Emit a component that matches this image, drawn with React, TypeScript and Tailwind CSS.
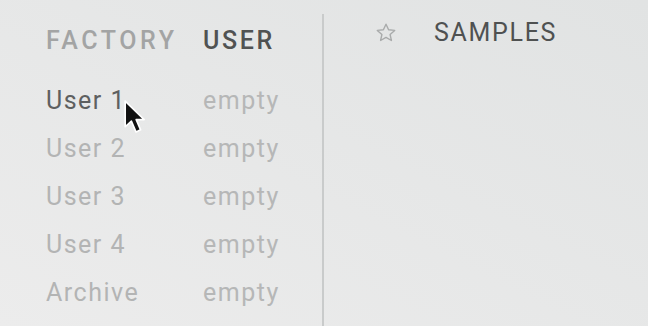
import React from "react";

const rows = ["User 1", "User 2", "User 3", "User 4", "Archive"];

function Cursor() {
  return (
    <svg
      className="absolute left-[123px] top-[99px]"
      width="27"
      height="37"
      viewBox="0 0 26 36"
    >
      <path
        d="M2 2 L2 27 L8 21.5 L12.5 32 L17 30 L12.7 20 L20.5 20 Z"
        fill="#111"
        stroke="#fff"
        strokeWidth="1.6"
        strokeLinejoin="round"
      />
    </svg>
  );
}

function Star() {
  return (
    <svg width="24" height="24" viewBox="0 0 24 24" className="text-[#a9abab]">
      <path
        d="M12 3.2l2.6 5.6 6.1.6-4.6 4.1 1.3 6-5.4-3.1-5.4 3.1 1.3-6-4.6-4.1 6.1-.6z"
        fill="none"
        stroke="currentColor"
        strokeWidth="1.4"
        strokeLinejoin="round"
      />
    </svg>
  );
}

export default function App() {
  return (
    <div
      className="relative flex h-[326px] w-[648px] overflow-hidden bg-gradient-to-tr from-[#ececec] to-[#e1e3e3] text-[25px]"
      style={{ fontFamily: "Roboto, 'Liberation Sans', sans-serif" }}
    >
      <div className="w-[322px] shrink-0 pl-[46px] pt-[17px]">
        <div className="grid h-[48px] grid-cols-[157px_auto] items-center font-medium leading-[48px]">
          <span className="tracking-[3.6px] text-[#a3a4a4]">FACTORY</span>
          <span className="tracking-[2.6px] text-[#505252]">USER</span>
        </div>
        <div className="mt-[12px] flex flex-col tracking-[1.5px]">
          {rows.map((name, i) => (
            <div key={name} className="grid h-[48px] grid-cols-[157px_auto] leading-[48px]">
              <span className={i === 0 ? "text-[#5e6060]" : "text-[#b3b4b4]"}>{name}</span>
              <span className="text-[#b6b7b7]">empty</span>
            </div>
          ))}
        </div>
      </div>
      <div className="mt-[14px] w-[2px] shrink-0 bg-[#c9cbcb]" />
      <div className="flex flex-1 items-start pt-[9px]">
        <div className="flex h-[48px] items-center pl-[50px]">
          <Star />
          <span className="ml-[36px] leading-[48px] tracking-[1.7px] text-[#4f5151]">SAMPLES</span>
        </div>
      </div>
      <Cursor />
    </div>
  );
}
